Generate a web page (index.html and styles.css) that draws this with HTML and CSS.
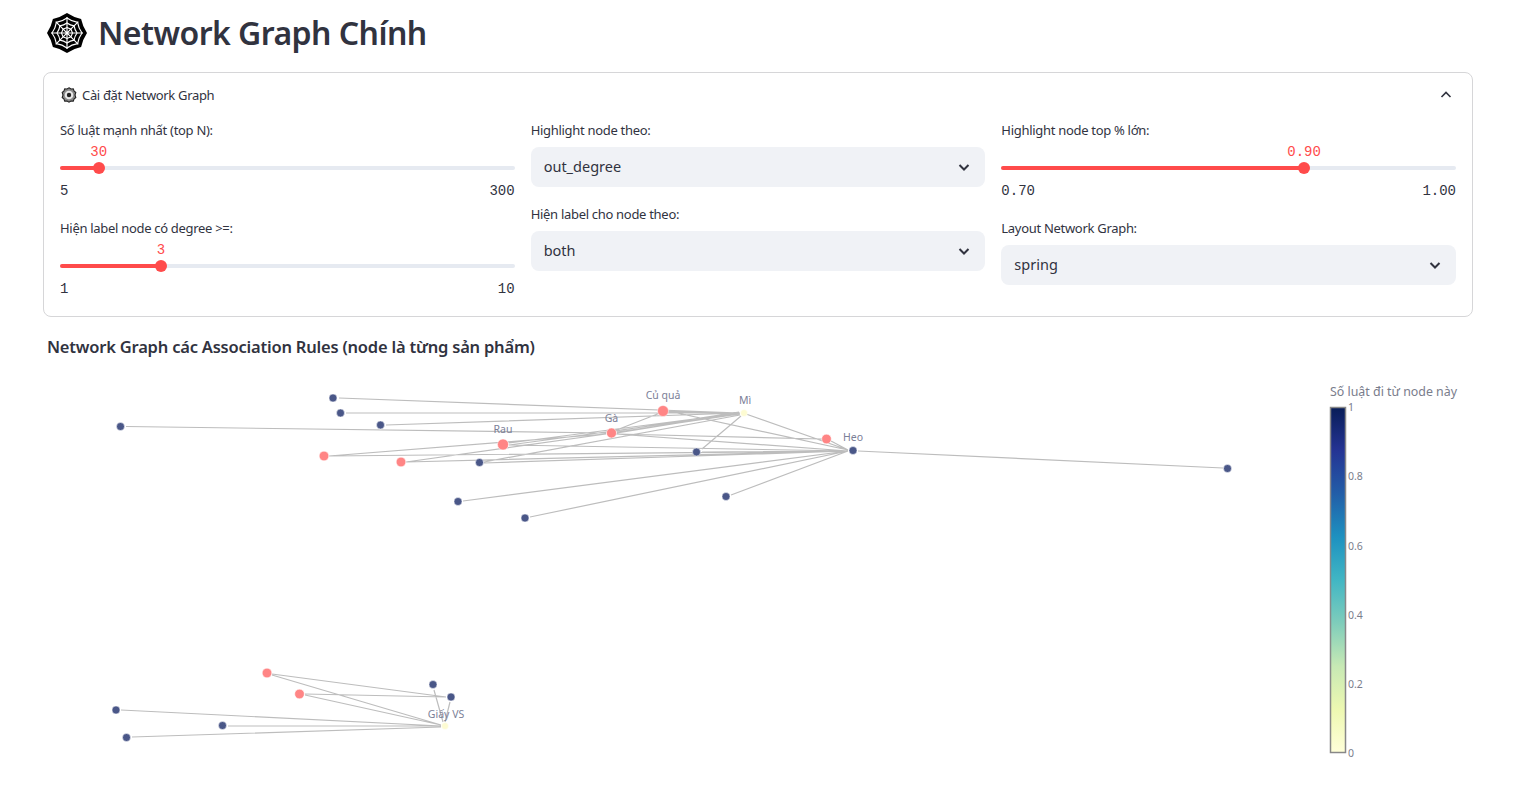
FILE: index.html
```html
<!DOCTYPE html>
<html lang="en">
<head>
    <meta charset="UTF-8">
    <meta name="viewport" content="width=device-width, initial-scale=1.0">
    <title>Network Graph Chính</title>
    <link rel="stylesheet" href="styles.css">
</head>
<body>
    <svg class="defs" width="0" height="0">
        <symbol id="web" viewBox="0 0 40 40">
            <path fill="#000" d="M20 0Q26.500 4.300 34.100 5.900Q35.700 13.500 40 20Q35.700 26.500 34.100 34.100Q26.500 35.700 20 40Q13.500 35.700 5.900 34.100Q4.300 26.500 0 20Q4.300 13.500 5.900 5.900Q13.500 4.300 20 0Z"/>
            <g fill="none" stroke="#fff" stroke-width="1.150">
                <path d="M20 5Q24.800 8.500 30.600 9.400Q31.500 15.200 35 20Q31.500 24.800 30.600 30.600Q24.800 31.500 20 35Q15.200 31.500 9.400 30.600Q8.500 24.800 5 20Q8.500 15.200 9.400 9.400Q15.200 8.500 20 5Z"/>
                <path d="M20 10Q23.200 12.300 27.100 12.900Q27.700 16.800 30 20Q27.700 23.200 27.100 27.100Q23.200 27.700 20 30Q16.800 27.700 12.900 27.100Q12.300 23.200 10 20Q12.300 16.800 12.900 12.900Q16.800 12.300 20 10Z"/>
                <path d="M20 14.500L23.900 16.100L25.500 20L23.900 23.900L20 25.500L16.100 23.900L14.500 20L16.100 16.100Z"/>
                <path d="M20 4V36M4 20H36M8.700 8.700L31.300 31.300M31.300 8.700L8.700 31.300"/>
            </g>
        </symbol>
        <symbol id="gear" viewBox="0 0 16 16">
            <path fill="#8a8a8a" stroke="#222" stroke-width="1.100" d="M8 .8L10 2L12.300 1.900L13 4L14.800 5.500L14 8L14.800 10.500L13 12L12.300 14.100L10 14L8 15.200L6 14L3.700 14.100L3 12L1.200 10.500L2 8L1.200 5.500L3 4L3.700 1.900L6 2Z"/>
            <circle cx="8" cy="8" r="4.300" fill="#e8e8e8"/>
            <circle cx="8" cy="8" r="2.200" fill="#222"/>
        </symbol>
        <symbol id="chevron" viewBox="0 0 16 16">
            <path d="M3.500 6L8 10.500L12.500 6" fill="none" stroke="currentColor" stroke-width="2"/>
        </symbol>
    </svg>

    <main class="page">
        <h1 class="title">
            <svg class="title-icon"><use href="#web"/></svg>
            Network Graph Chính
        </h1>

        <section class="expander">
            <div class="expander-head">
                <svg class="expander-icon"><use href="#gear"/></svg>
                <span>Cài đặt Network Graph</span>
                <svg class="expander-toggle" viewBox="0 0 16 16"><path d="M3.500 10L8 5.500L12.500 10" fill="none" stroke="currentColor" stroke-width="1.600"/></svg>
            </div>

            <div class="settings">
                <div class="col">
                    <div class="field slider">
                        <label>Số luật mạnh nhất (top N):</label>
                        <div class="track">
                            <div class="fill" style="width: 8.5%">
                                <span class="thumb"></span>
                                <span class="value">30</span>
                            </div>
                        </div>
                        <div class="range"><span>5</span><span>300</span></div>
                    </div>
                    <div class="field slider">
                        <label>Hiện label node có degree &gt;=:</label>
                        <div class="track">
                            <div class="fill" style="width: 22.2%">
                                <span class="thumb"></span>
                                <span class="value">3</span>
                            </div>
                        </div>
                        <div class="range"><span>1</span><span>10</span></div>
                    </div>
                </div>

                <div class="col">
                    <div class="field select">
                        <label>Highlight node theo:</label>
                        <div class="select-box">out_degree<svg class="chevron"><use href="#chevron"/></svg></div>
                    </div>
                    <div class="field select">
                        <label>Hiện label cho node theo:</label>
                        <div class="select-box">both<svg class="chevron"><use href="#chevron"/></svg></div>
                    </div>
                </div>

                <div class="col">
                    <div class="field slider">
                        <label>Highlight node top % lớn:</label>
                        <div class="track">
                            <div class="fill" style="width: 66.6%">
                                <span class="thumb"></span>
                                <span class="value">0.90</span>
                            </div>
                        </div>
                        <div class="range"><span>0.70</span><span>1.00</span></div>
                    </div>
                    <div class="field select">
                        <label>Layout Network Graph:</label>
                        <div class="select-box">spring<svg class="chevron"><use href="#chevron"/></svg></div>
                    </div>
                </div>
            </div>
        </section>

        <h3 class="subtitle">Network Graph các Association Rules (node là từng sản phẩm)</h3>

        <!-- viewBox uses page coordinates so the nodes read straight off the plot -->
        <svg class="graph" viewBox="43 365 1430 426">
            <defs>
                <linearGradient id="ylgnbu" x1="0" y1="0" x2="0" y2="1">
                    <stop offset="0" stop-color="#081d58"/>
                    <stop offset="0.125" stop-color="#253494"/>
                    <stop offset="0.25" stop-color="#225ea8"/>
                    <stop offset="0.375" stop-color="#1d91c0"/>
                    <stop offset="0.5" stop-color="#41b6c4"/>
                    <stop offset="0.625" stop-color="#7fcdbb"/>
                    <stop offset="0.75" stop-color="#c7e9b4"/>
                    <stop offset="0.875" stop-color="#edf8b1"/>
                    <stop offset="1" stop-color="#ffffd9"/>
                </linearGradient>
            </defs>

            <path class="edges" d="
                M339 398L740 413M346 413L740 413M386 425L740 413
                M668 411L740 413M668 412L739 414M617 433L740 413M616 431L739 412M617 432L740 414M509 443L740 413M509 445L739 414
                M329 456L606 434M406 462L606 434M484 462L740 415M702 449L741 416
                M614 431L660 413
                M126 426.500L606 433M617 434L822 439
                M329 456L848 451M406 462L848 451M484 463L848 451
                M463 501L848 451M530 517L848 451M731 495L848 451M702 452L848 451
                M746 414L848 450M831 441L848 450M668 411L848 450M616 434L848 451M509 445L848 451
                M858 451L1223 468
                M272 674L446 697M272 675L441 725M305 694L446 697M305 695L441 725
                M434 690L443 722M450 702L445 722
                M121 710L441 726M228 726L441 726M132 737L441 727"/>

            <g class="node-dark">
                <circle cx="333" cy="398" r="4"/>
                <circle cx="340.500" cy="413" r="4"/>
                <circle cx="380.500" cy="425" r="4"/>
                <circle cx="120.500" cy="426.500" r="4"/>
                <circle cx="479.500" cy="462.500" r="4"/>
                <circle cx="458" cy="501.500" r="4"/>
                <circle cx="525" cy="518" r="4"/>
                <circle cx="726" cy="496.500" r="4"/>
                <circle cx="696.500" cy="452" r="4"/>
                <circle cx="853" cy="450.500" r="4"/>
                <circle cx="1227.500" cy="468.500" r="4"/>
                <circle cx="433" cy="684.500" r="4"/>
                <circle cx="451" cy="697" r="4"/>
                <circle cx="116" cy="710" r="4"/>
                <circle cx="222.500" cy="725.500" r="4"/>
                <circle cx="126.500" cy="737.500" r="4"/>
            </g>
            <g class="node-hot">
                <circle cx="663" cy="411" r="5.500"/>
                <circle cx="611.500" cy="433" r="5"/>
                <circle cx="503" cy="444.500" r="5.500"/>
                <circle cx="324" cy="456" r="4.800"/>
                <circle cx="401" cy="462" r="4.800"/>
                <circle cx="826.500" cy="439" r="4.800"/>
                <circle cx="267" cy="673" r="4.800"/>
                <circle cx="299.500" cy="694" r="4.800"/>
            </g>
            <g class="node-pale">
                <circle cx="744" cy="413" r="3.500"/>
                <circle cx="445" cy="726" r="3.500"/>
            </g>

            <g class="node-label">
                <text x="663" y="399">Củ quả</text>
                <text x="745" y="404">Mì</text>
                <text x="611.500" y="422">Gà</text>
                <text x="503" y="433">Rau</text>
                <text x="853" y="441">Heo</text>
                <text x="446" y="718">Giấy VS</text>
            </g>

            <text class="bar-title" x="1330" y="396">Số luật đi từ node này</text>
            <rect class="bar" x="1330.500" y="407.500" width="15" height="345"/>
            <g class="bar-tick">
                <text x="1348" y="411">1</text>
                <text x="1348" y="480">0.8</text>
                <text x="1348" y="550">0.6</text>
                <text x="1348" y="619">0.4</text>
                <text x="1348" y="688">0.2</text>
                <text x="1348" y="757">0</text>
            </g>
        </svg>
    </main>
</body>
</html>
```

FILE: styles.css
```css
* { box-sizing: border-box; }
html, body { height: 100%; }
body {
    margin: 0;
    overflow: hidden;
    font-family: "Noto Sans", sans-serif;
    font-size: 13px;
    color: #31333f;
    background: #fff;
}
.defs { position: absolute; }
.page { padding: 0 58px 0 43px; }

.title {
    display: flex;
    align-items: center;
    gap: 11px;
    height: 72px;
    margin: 0;
    padding: 0 0 7px 4px;
    font-size: 32px;
    font-weight: 600;
    letter-spacing: -0.55px;
}
.title-icon { width: 40px; height: 40px; }

.expander {
    height: 245px;
    border: 1px solid #d6d6d8;
    border-radius: 8px;
}
.expander-head {
    display: flex;
    align-items: center;
    gap: 5px;
    height: 44px;
    padding: 0 18px 0 17px;
    letter-spacing: -0.33px;
}
.expander-icon { width: 16px; height: 16px; }
.expander-toggle { width: 16px; height: 16px; margin-left: auto; }

.settings {
    display: grid;
    grid-template-columns: repeat(3, 1fr);
    gap: 16px;
    padding: 1px 16px 0;
}
.field label { display: block; height: 25px; line-height: 25px; letter-spacing: -0.3px; }
.col { display: flex; flex-direction: column; }

.slider { height: 98px; }
.track {
    height: 4px;
    margin-top: 23px;
    background: #e6eaf1;
    border-radius: 2px;
}
.fill {
    position: relative;
    height: 4px;
    background: #ff4b4b;
    border-radius: 2px;
}
.thumb {
    position: absolute;
    right: -6px;
    top: -4px;
    width: 12px;
    height: 12px;
    background: #ff4b4b;
    border-radius: 50%;
}
.value {
    position: absolute;
    right: 0;
    top: -23px;
    transform: translateX(50%);
    font-family: "Liberation Mono", monospace;
    font-size: 14px;
    line-height: 18px;
    color: #ff4b4b;
}
.range {
    display: flex;
    justify-content: space-between;
    margin-top: 12px;
    font-family: "Liberation Mono", monospace;
    font-size: 14px;
    line-height: 18px;
}

.select { height: 84px; }
.select-box {
    display: flex;
    align-items: center;
    justify-content: space-between;
    height: 40px;
    margin-top: 4px;
    padding: 0 13px 2px 13px;
    font-size: 14.500px;
    background: #f0f2f6;
    border-radius: 8px;
}
.chevron { width: 16px; height: 16px; margin-top: 1px; }

.subtitle {
    height: 60px;
    margin: 0;
    padding: 0 0 0 4px;
    font-size: 16.500px;
    font-weight: 600;
    line-height: 60px;
    letter-spacing: -0.21px;
}

.graph { display: block; width: 1430px; height: 426px; margin-top: -12px; }
.edges { fill: none; stroke: #bdbdbd; stroke-width: 1.200; }
.node-dark circle { fill: #4a5788; stroke: #fff; stroke-width: 0.5; }
.node-hot circle { fill: #ff8585; stroke: #fff; stroke-width: 0.5; }
.node-pale circle { fill: #fdfbd2; stroke: #fff; stroke-width: 0.5; }
.node-label text {
    font-size: 10.500px;
    fill: #7b8097;
    text-anchor: middle;
}
.bar-title { font-size: 12.400px; fill: #7a7d8c; }
.bar { fill: url(#ylgnbu); stroke: #888; stroke-width: 1.500; }
.bar-tick text { font-size: 10.500px; fill: #7a7d8c; }
```
